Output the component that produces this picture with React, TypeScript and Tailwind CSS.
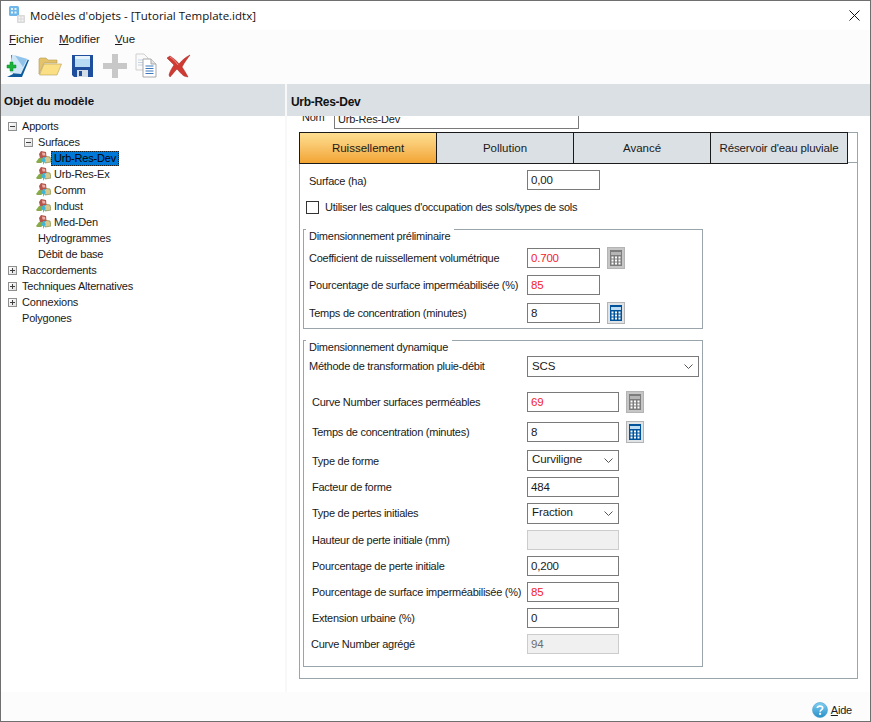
import React from "react";

const labelText = "text-[11px] tracking-[-0.26px] text-[#1a1a1a] leading-none whitespace-nowrap";

function Expander({ open }: { open: boolean }) {
  return (
    <span className="relative w-[9px] h-[9px] border border-[#8e8f8f] bg-gradient-to-br from-white to-[#e0e0e0] shrink-0">
      <span className="absolute left-[1px] top-[3px] w-[5px] h-px bg-[#404040]" />
      {!open && <span className="absolute left-[3px] top-[1px] w-px h-[5px] bg-[#404040]" />}
    </span>
  );
}

function SurfaceIcon() {
  return (
    <svg width="15" height="14" viewBox="0 0 15 14" className="shrink-0">
      <path d="M0 11 L3 7 L7 6 L8 10 L5 12 L1 12 Z" fill="#8aa94a" />
      <path d="M8 5 L14 6 L15 11 L9 12 Z" fill="#d6c88e" stroke="#7f9148" strokeWidth="0.7" />
      <path d="M3 3 L5 0 L10 1 L10.5 6 L8 7 L4 7 Z" fill="#b6544c" />
      <path d="M6 1.5 L9 2 L9.5 4.5 L6.5 4.5 Z" fill="#eeb0a6" />
      <path d="M7 6 L9 6 L8.5 8.5 L10 8.5 L7 14 L7 10.5 L5.5 10.5 Z" fill="#36b7e8" />
    </svg>
  );
}

function TreeRow({ indent, expander, icon, selected, children }: { indent: string; expander?: "open" | "closed"; icon?: boolean; selected?: boolean; children: string }) {
  return (
    <div className={`flex items-center h-[16px] ${indent}`}>
      {expander && <span className="w-[14px] flex"><Expander open={expander === "open"} /></span>}
      {icon && <span className="w-[15px] flex"><SurfaceIcon /></span>}
      <span className={selected ? "text-[11px] tracking-[-0.2px] leading-[15px] text-black bg-[#0078d7] outline-1 outline-dotted outline-[#222] -outline-offset-1 pl-[3px] pr-[3px] h-[15px]" : icon ? "text-[11px] tracking-[-0.2px] leading-none text-[#1a1a1a] pl-[3px]" : "text-[11px] tracking-[-0.2px] leading-none text-[#1a1a1a]"}>
        {children}
      </span>
    </div>
  );
}

function Field({ value, width, red, disabled }: { value?: string; width: string; red?: boolean; disabled?: boolean }) {
  return (
    <div className={`${width} h-[20px] shrink-0 border flex items-center pl-[3px] pt-[2px] text-[11.5px] tracking-[-0.2px] leading-none ${disabled ? "border-[#cccccc] bg-[#f0f0f0] text-[#6d6d6d]" : "border-[#7a7a7a] bg-white"} ${red ? "text-[#f5222d]" : disabled ? "" : "text-[#1a1a1a]"}`}>
      {value}
    </div>
  );
}

function Select({ value, width }: { value: string; width: string }) {
  return (
    <div className={`${width} h-[21px] shrink-0 border border-[#7a7a7a] bg-white flex items-center justify-between pl-[4px] pr-[5px] text-[11.5px] tracking-[-0.1px] leading-none text-[#1a1a1a]`}>
      <span>{value}</span>
      <svg width="9" height="5" viewBox="0 0 9 5"><path d="M0.5 0.5 L4.5 4.5 L8.5 0.5" fill="none" stroke="#555" /></svg>
    </div>
  );
}

function CalcButton({ active, className }: { active?: boolean; className: string }) {
  const main = active ? "#00539b" : "#7d7d7d";
  const screen = active ? "#bcdcf4" : "#b5b5b5";
  return (
    <div className={`w-[18px] h-[22px] shrink-0 flex items-center justify-center border border-[#b4b4b4] ${active ? "bg-[#dfe3e6]" : "bg-[#c6c6c6]"} ${className}`}>
      <svg width="12" height="16" viewBox="0 0 12 16">
        <rect width="12" height="16" fill={main} />
        <rect x="1" y="2" width="10" height="3" fill={screen} />
        {[6.5, 9.5, 12.5].map((y) =>
          [1.5, 5, 8.5].map((x) => <rect key={`${x}-${y}`} x={x} y={y} width="2" height="2" fill="#ffffff" />),
        )}
      </svg>
    </div>
  );
}

function Group({ title, className, children }: { title: string; className: string; children: React.ReactNode }) {
  return (
    <div className={`relative w-[400px] border border-[#9aa4ab] ${className}`}>
      <span className={`absolute -top-px left-[2px] h-[14px] bg-white pl-[3px] pr-[4px] pt-[2px] ${labelText}`}>{title}</span>
      {children}
    </div>
  );
}

function FormRow({ label, labelClass, className, children }: { label: string; labelClass: string; className: string; children: React.ReactNode }) {
  return (
    <div className={`flex items-center h-[20px] ${className}`}>
      <span className={`${labelText} ${labelClass}`}>{label}</span>
      {children}
    </div>
  );
}

function App() {
  return (
    <div className="w-[871px] h-[722px] flex flex-col border border-[#6f6f6f] bg-white overflow-hidden" style={{ fontFamily: '"Liberation Sans", Arial, sans-serif' }}>
      {/* title bar */}
      <div className="h-[29px] shrink-0 flex items-center bg-white pl-[8px] pr-[10px]">
        <svg width="17" height="17" viewBox="0 0 17 17" className="mr-[4px] -mt-[2px]">
          <rect x="0" y="0" width="10" height="10" rx="1.5" fill="#6fb7e8" />
          <path d="M2 2 H4 V4 H2 Z M5.5 2 H7.5 V4 H5.5 Z M2 5.5 H4 V7.5 H2 Z M5.5 5.5 H7.5 V7.5 H5.5 Z" fill="#e6f4fd" />
          <rect x="8" y="9" width="8" height="8" rx="1" fill="#d9d9d9" />
          <path d="M9.5 10.5 H11.5 V12.5 H9.5 Z M12.5 10.5 H14.5 V12.5 H12.5 Z M9.5 13.5 H11.5 V15.5 H9.5 Z M12.5 13.5 H14.5 V15.5 H12.5 Z" fill="#f4f4f4" />
        </svg>
        <span className="text-[11.5px] text-[#111]" style={{ fontFamily: '"Open Sans", sans-serif' }}>Modèles d'objets - [Tutorial Template.idtx]</span>
        <svg width="11" height="11" viewBox="0 0 11 11" className="ml-auto"><path d="M0.5 0.5 L10.5 10.5 M10.5 0.5 L0.5 10.5" stroke="#111" strokeWidth="1" /></svg>
      </div>

      {/* menu */}
      <div className="h-[20px] shrink-0 flex items-center bg-[#fcfcfc] pl-[8px] text-[11.5px] text-[#1a1a1a]">
        <span className="w-[50px]"><u>F</u>ichier</span>
        <span className="w-[56px]"><u>M</u>odifier</span>
        <span><u>V</u>ue</span>
      </div>

      {/* toolbar */}
      <div className="h-[34px] shrink-0 flex items-center bg-[#fcfcfc] pl-[4px] pb-[3px]">
        <svg width="26" height="26" viewBox="0 0 26 26" className="mr-[7px]">
          <path d="M6 2 L24 7 L17 24 L2 24 L8 21 Z" fill="#0f5a9c" />
          <path d="M7 1.5 L23 6 L16 21 L5 20 Z" fill="#cfe6f7" />
          <path d="M10 2.5 L22 6 L18 14 Z" fill="#8fc3ea" />
          <path d="M5 9 H8 V12 H11 V15 H8 V18 H5 V15 H2 V12 H5 Z" fill="#19b23b" stroke="#0e8a2b" strokeWidth="0.5" />
        </svg>
        <svg width="24" height="22" viewBox="0 0 24 22" className="mr-[9px]">
          <path d="M1 19 V4 L2 3 H8 L10 5 H19 V8 H6 L1 19 Z" fill="#e3c26a" stroke="#b59a55" strokeWidth="0.6" />
          <path d="M1.5 20 L6 9 H23.5 L19 20 Z" fill="#fbdf85" stroke="#b7a060" strokeWidth="0.6" />
        </svg>
        <svg width="23" height="24" viewBox="0 0 23 24" className="mr-[8px]">
          <path d="M1 1 H22 V23 H3 L1 21 Z" fill="#1f4f9c" />
          <rect x="4" y="2" width="15" height="11" fill="#b9dcf5" />
          <rect x="4" y="2" width="15" height="3" fill="#e4f1fb" />
          <rect x="6" y="16" width="11" height="7" fill="#d4dce6" />
          <rect x="8" y="17" width="3" height="5" fill="#1f4f9c" />
        </svg>
        <svg width="26" height="26" viewBox="0 0 26 26" className="mr-[7px]">
          <path d="M10 1 H16 V10 H25 V16 H16 V25 H10 V16 H1 V10 H10 Z" fill="#c8c8c8" />
        </svg>
        <svg width="23" height="25" viewBox="0 0 23 25" className="mr-[8px]">
          <path d="M1 1 H9 L13 5 V17 H1 Z" fill="#fafafa" stroke="#cfcfcf" />
          <path d="M3 7 H9 M3 9.5 H9 M3 12 H9" stroke="#c5d4e6" />
          <path d="M8 6 H16 L21 11 V24 H8 Z" fill="#ffffff" stroke="#a9a9a9" />
          <path d="M16 6 V11 H21" fill="#e4e4e4" stroke="#a9a9a9" />
          <path d="M10.5 13 H18.5 M10.5 15.5 H18.5 M10.5 18 H18.5 M10.5 20.5 H18.5" stroke="#3c78bb" />
        </svg>
        <svg width="25" height="24" viewBox="0 0 25 24">
          <path d="M1 4 L4 2 C7 4 11 7 13 10 C16 6 20 3 24 1 C21 5 18 9 16 13 C18 16 20 19 22 23 L18 22 C15 20 13 17 11 15 C8 18 6 21 4 23 L3 21 C4 17 6 14 8 11 C6 9 3 6 1 4 Z" fill="#cf3a32" stroke="#a31c17" strokeWidth="0.5" />
          <path d="M4 3 C7 5 10 8 12 11" fill="none" stroke="#ec8d85" />
        </svg>
      </div>

      {/* main */}
      <div className="flex-1 grid grid-cols-[284px_1fr] gap-x-[2px] bg-[#f8f8f8] min-h-0">
        <div className="flex flex-col min-h-0">
          <div className="h-[32px] shrink-0 bg-[#dae0e4] flex items-center pl-[3px] pt-[3px] text-[11.5px] font-bold text-[#111]">Objet du modèle</div>
          <div className="flex-1 bg-white pt-[2px]">
            <TreeRow indent="pl-[7px]" expander="open">Apports</TreeRow>
            <TreeRow indent="pl-[23px]" expander="open">Surfaces</TreeRow>
            <TreeRow indent="pl-[35px]" icon selected>Urb-Res-Dev</TreeRow>
            <TreeRow indent="pl-[35px]" icon>Urb-Res-Ex</TreeRow>
            <TreeRow indent="pl-[35px]" icon>Comm</TreeRow>
            <TreeRow indent="pl-[35px]" icon>Indust</TreeRow>
            <TreeRow indent="pl-[35px]" icon>Med-Den</TreeRow>
            <TreeRow indent="pl-[37px]">Hydrogrammes</TreeRow>
            <TreeRow indent="pl-[37px]">Débit de base</TreeRow>
            <TreeRow indent="pl-[7px]" expander="closed">Raccordements</TreeRow>
            <TreeRow indent="pl-[7px]" expander="closed">Techniques Alternatives</TreeRow>
            <TreeRow indent="pl-[7px]" expander="closed">Connexions</TreeRow>
            <TreeRow indent="pl-[21px]">Polygones</TreeRow>
          </div>
        </div>

        <div className="flex flex-col min-h-0">
          <div className="h-[32px] shrink-0 bg-[#dae0e4] flex items-center pl-[4px] pt-[3px] text-[12px] font-bold text-[#111] tracking-[-0.3px]">Urb-Res-Dev</div>
          <div className="flex-1 bg-white pl-[12px] min-h-0">
            <div className="h-[13px] overflow-hidden flex items-end pl-[3px]">
              <span className={`${labelText} w-[32px] pb-[6px]`}>Nom</span>
              <div className="w-[245px] h-[20px] shrink-0 border border-[#7a7a7a] pl-[3px] flex items-center text-[11px] tracking-[-0.2px] text-[#1a1a1a]">Urb-Res-Dev</div>
            </div>

            <div className="w-[559px] h-[547px] mt-[3px] border border-[#9aa4ab]">
              <div className="flex h-[31px] border-b border-[#9aa4ab] -mt-px -ml-px">
                <div className="w-[138px] h-[32px] pt-[1px] border border-[#1a1a1a] bg-gradient-to-b from-[#fddf90] to-[#f2a431] flex items-center justify-center text-[11.5px] text-[#1a1a1a]">Ruissellement</div>
                <div className="w-[138px] h-[32px] pt-[1px] -ml-px border border-[#1a1a1a] bg-[#dae0e4] flex items-center justify-center text-[11.5px] text-[#1a1a1a]">Pollution</div>
                <div className="w-[138px] h-[32px] pt-[1px] -ml-px border border-[#1a1a1a] bg-[#dae0e4] flex items-center justify-center text-[11.5px] text-[#1a1a1a]">Avancé</div>
                <div className="w-[138px] h-[32px] pt-[1px] -ml-px border border-[#1a1a1a] bg-[#dae0e4] flex items-center justify-center text-[11.5px] tracking-[-0.15px] text-[#1a1a1a]">Réservoir d'eau pluviale</div>
              </div>

              <div className="pl-[3px] pt-[7px]">
                <FormRow label="Surface (ha)" labelClass="w-[224px] pl-[6px] translate-y-[1px]" className="">
                  <Field width="w-[73px]" value="0,00" />
                </FormRow>
                <div className="flex items-center gap-[6px] h-[13px] mt-[11px] pl-[3px]">
                  <span className="w-[13px] h-[13px] border border-[#333] bg-white shrink-0" />
                  <span className={labelText}>Utiliser les calques d'occupation des sols/types de sols</span>
                </div>

                <Group title="Dimensionnement préliminaire" className="h-[100px] mt-[15px] pt-[18px]">
                  <FormRow label="Coefficient de ruissellement volumétrique" labelClass="w-[223px] pl-[5px]" className="">
                    <Field width="w-[73px]" value="0.700" red />
                    <CalcButton className="ml-[7px]" />
                  </FormRow>
                  <FormRow label="Pourcentage de surface imperméabilisée (%)" labelClass="w-[223px] pl-[5px]" className="mt-[7px]">
                    <Field width="w-[73px]" value="85" red />
                  </FormRow>
                  <FormRow label="Temps de concentration (minutes)" labelClass="w-[223px] pl-[5px]" className="mt-[8px]">
                    <Field width="w-[73px]" value="8" />
                    <CalcButton active className="ml-[7px]" />
                  </FormRow>
                </Group>

                <Group title="Dimensionnement dynamique" className="h-[327px] mt-[11px] pt-[15px]">
                  <div className="flex items-center h-[21px]">
                    <span className={`${labelText} w-[223px] pl-[5px]`}>Méthode de transformation pluie-débit</span>
                    <Select width="w-[172px]" value="SCS" />
                  </div>
                  <FormRow label="Curve Number surfaces perméables" labelClass="w-[223px] pl-[8px]" className="mt-[15px]">
                    <Field width="w-[92px]" value="69" red />
                    <CalcButton className="ml-[7px]" />
                  </FormRow>
                  <FormRow label="Temps de concentration (minutes)" labelClass="w-[223px] pl-[8px]" className="mt-[10px]">
                    <Field width="w-[92px]" value="8" />
                    <CalcButton active className="ml-[7px]" />
                  </FormRow>
                  <FormRow label="Type de forme" labelClass="w-[223px] pl-[8px] translate-y-[1px]" className="mt-[8px]">
                    <Select width="w-[92px]" value="Curviligne" />
                  </FormRow>
                  <FormRow label="Facteur de forme" labelClass="w-[223px] pl-[8px]" className="mt-[7px]">
                    <Field width="w-[92px]" value="484" />
                  </FormRow>
                  <FormRow label="Type de pertes initiales" labelClass="w-[223px] pl-[8px]" className="mt-[6px]">
                    <Select width="w-[92px]" value="Fraction" />
                  </FormRow>
                  <FormRow label="Hauteur de perte initiale (mm)" labelClass="w-[223px] pl-[8px]" className="mt-[7px]">
                    <Field width="w-[92px]" disabled />
                  </FormRow>
                  <FormRow label="Pourcentage de perte initiale" labelClass="w-[223px] pl-[8px]" className="mt-[6px]">
                    <Field width="w-[92px]" value="0,200" />
                  </FormRow>
                  <FormRow label="Pourcentage de surface imperméabilisée (%)" labelClass="w-[223px] pl-[8px]" className="mt-[6px]">
                    <Field width="w-[92px]" value="85" red />
                  </FormRow>
                  <FormRow label="Extension urbaine (%)" labelClass="w-[223px] pl-[8px]" className="mt-[6px]">
                    <Field width="w-[92px]" value="0" />
                  </FormRow>
                  <FormRow label="Curve Number agrégé" labelClass="w-[223px] pl-[7px]" className="mt-[6px]">
                    <Field width="w-[92px]" value="94" disabled />
                  </FormRow>
                </Group>
              </div>
            </div>
          </div>
        </div>
      </div>

      {/* bottom bar */}
      <div className="h-[29px] shrink-0 bg-[#fcfcfc] flex items-center justify-end pt-[7px] pr-[18px] gap-[3px]">
        <svg width="16" height="16" viewBox="0 0 16 16">
          <defs>
            <linearGradient id="help" x1="0" y1="0" x2="0" y2="1">
              <stop offset="0" stopColor="#7fd0f2" />
              <stop offset="1" stopColor="#2a8fc9" />
            </linearGradient>
          </defs>
          <circle cx="8" cy="8" r="7.5" fill="url(#help)" stroke="#4a9cc9" strokeWidth="0.6" />
          <path d="M5.3 6 C5.5 3.6 10.6 3.6 10.7 6 C10.8 7.8 8.2 7.8 8.1 9.6" fill="none" stroke="#ffffff" strokeWidth="1.7" />
          <rect x="7.1" y="10.8" width="2" height="2" fill="#ffffff" />
        </svg>
        <span className="text-[11px] tracking-[-0.2px] text-[#1a1a1a]"><u>A</u>ide</span>
      </div>
    </div>
  );
}

export default App;
